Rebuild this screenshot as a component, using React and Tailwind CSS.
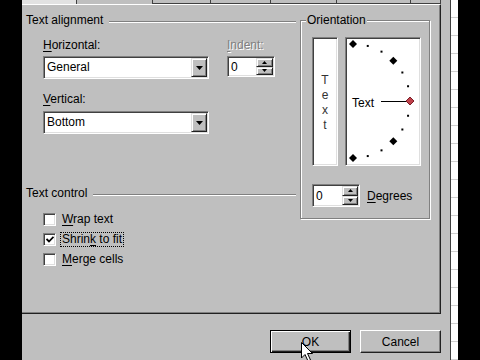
import React from "react";

// classic win9x bevels
const sunken =
  "border border-t-[#808080] border-l-[#808080] border-b-white border-r-white shadow-[inset_1px_1px_0_#404040,inset_-1px_-1px_0_#dfdfdf] p-[1px]";
const raised =
  "border border-t-[#dfdfdf] border-l-[#dfdfdf] border-b-[#202020] border-r-[#202020] shadow-[inset_1px_1px_0_#fff,inset_-1px_-1px_0_#808080]";
const etchedLine = "h-[2px] border-t border-t-[#808080] border-b border-b-white";

const Arrow = ({ up }) => (
  <svg width="7" height="4" viewBox="0 0 7 4">
    <polygon points={up ? "3.5,0 7,4 0,4" : "0,0 7,0 3.5,4"} fill="#000" />
  </svg>
);

const SmallArrow = ({ up }) => (
  <svg width="5" height="3" viewBox="0 0 5 3">
    <polygon points={up ? "2.5,0 5,3 0,3" : "0,0 5,0 2.5,3"} fill="#000" />
  </svg>
);

function Combo({ value }) {
  return (
    <div className={`w-[166px] h-[23px] bg-white flex ${sunken}`}>
      <span className="flex-1 pl-[2px] leading-[19px]">{value}</span>
      <div className={`w-[16px] bg-[#bfbfbf] flex items-center justify-center ${raised}`}>
        <Arrow />
      </div>
    </div>
  );
}

function Spinner({ className, btn }) {
  return (
    <div className={`${className} bg-white flex ${sunken}`}>
      <span className="flex-1 pl-[2px] self-center">0</span>
      <div className={`${btn} flex flex-col`}>
        <div className={`flex-1 bg-[#bfbfbf] flex items-center justify-center ${raised}`}>
          <SmallArrow up />
        </div>
        <div className={`flex-1 bg-[#bfbfbf] flex items-center justify-center ${raised}`}>
          <SmallArrow />
        </div>
      </div>
    </div>
  );
}

function Check({ checked, focused, children }) {
  return (
    <div className="h-[20px] flex items-center">
      <div className={`w-[13px] h-[13px] bg-white ${sunken} flex items-center justify-center`}>
        {checked && (
          <svg width="8" height="7" viewBox="0 0 8 7">
            <path d="M0.5 3 L3 5.5 L7.5 0.8" stroke="#000" strokeWidth="1.8" fill="none" />
          </svg>
        )}
      </div>
      <span
        className={`ml-[4px] px-[1px] leading-[13px] border ${
          focused ? "border-dotted border-black" : "border-transparent"
        }`}
      >
        {children}
      </span>
    </div>
  );
}

const U = ({ children }) => <span className="underline underline-offset-2">{children}</span>;

// orientation dial, coords relative to white inner box
const dots = [90, 75, 60, 45, 30, 15, 0, -15, -30, -45, -60, -75, -90].map((a) => {
  const r = (a * Math.PI) / 180;
  return { a, x: 6 + 57 * Math.cos(r), y: 62 - 57 * Math.sin(r) };
});

function Dial() {
  return (
    <svg width="72" height="125" viewBox="0 0 72 125">
      {dots.map((d) => {
        if (d.a === 0)
          return (
            <polygon
              key={d.a}
              points={`${d.x},${d.y - 4} ${d.x + 4},${d.y} ${d.x},${d.y + 4} ${d.x - 4},${d.y}`}
              fill="#c0404a"
              stroke="#7a1f28"
              strokeWidth="1"
            />
          );
        if (Math.abs(d.a) % 45 === 0)
          return (
            <polygon
              key={d.a}
              points={`${d.x},${d.y - 4} ${d.x + 4},${d.y} ${d.x},${d.y + 4} ${d.x - 4},${d.y}`}
              fill="#000"
            />
          );
        return <rect key={d.a} x={d.x - 1} y={d.y - 1} width="2" height="2" fill="#000" />;
      })}
      <line x1="34" y1="62.5" x2="59" y2="62.5" stroke="#000" strokeWidth="1" />
      <text x="5" y="68" fontSize="12" fill="#000" fontFamily="Liberation Sans, Arial, sans-serif">
        Text
      </text>
    </svg>
  );
}

export default function App() {
  return (
    <div className="w-[480px] h-[360px] flex bg-black overflow-hidden relative text-[12px] leading-[14px] text-black [font-family:'Liberation_Sans',Arial,sans-serif]">
      <div className="w-[22px] shrink-0" />

      {/* dialog body */}
      <div className="w-[429px] shrink-0 flex flex-col bg-[#bfbfbf] border-r border-r-[#404040]">
        {/* bottoms of the tabs */}
        <div className="h-[4px] flex">
          <div className="w-[55px] bg-[#e2e2e2] border-r border-r-[#404040]" />
          <div className="w-[75px]" />
          <div className="w-[58px] border-l border-b border-[#404040]" />
          <div className="w-[60px] border-l border-b border-[#404040]" />
          <div className="w-[66px] border-l border-b border-[#404040]" />
          <div className="w-[74px] border-l border-b border-[#404040]" />
          <div className="w-[31px] border-l border-b border-r border-[#404040]" />
        </div>

        {/* tab page */}
        <div className="w-[419px] h-[310px] flex pl-[4px] border-t border-t-white border-r border-r-[#202020] border-b border-b-[#202020] shadow-[inset_-1px_-1px_0_#808080]">
          {/* left column */}
          <div className="w-[270px] flex flex-col pt-[8px]">
            <div className="flex items-center h-[14px]">
              <span>Text alignment</span>
              <div className={`flex-1 ml-[6px] mt-[3px] ${etchedLine}`} />
            </div>

            <div className="ml-[17px] mt-[11px] flex">
              <div className="flex flex-col">
                <span>
                  <U>H</U>orizontal:
                </span>
                <div className="mt-[4px]">
                  <Combo value="General" />
                </div>
              </div>
              <div className="ml-[18px] flex flex-col">
                <span className="text-[#808080] [text-shadow:1px_1px_0_#fff]">
                  <U>I</U>ndent:
                </span>
                <Spinner className="mt-[4px] w-[48px] h-[21px]" btn="w-[17px]" />
              </div>
            </div>

            <div className="ml-[17px] mt-[13px] flex flex-col">
              <span>
                <U>V</U>ertical:
              </span>
              <div className="mt-[5px]">
                <Combo value="Bottom" />
              </div>
            </div>

            <div className="flex items-center h-[14px] mt-[52px]">
              <span>Text control</span>
              <div className={`flex-1 ml-[6px] mt-[3px] ${etchedLine}`} />
            </div>

            <div className="ml-[17px] mt-[9px] flex flex-col">
              <Check>
                <U>W</U>rap text
              </Check>
              <Check checked focused>
                Shrin<U>k</U> to fit
              </Check>
              <Check>
                <U>M</U>erge cells
              </Check>
            </div>
          </div>

          {/* orientation group */}
          <div className="ml-[4px] mt-[15px] w-[130px] h-[199px] relative border border-[#808080] shadow-[inset_1px_1px_0_#fff,1px_1px_0_#fff]">
            <span className="absolute -top-[8px] left-[5px] px-[1px] bg-[#bfbfbf]">Orientation</span>
            <div className="ml-[11px] mt-[16px] flex gap-[7px]">
              <div className={`w-[26px] h-[129px] bg-white ${sunken}`}>
                <div className="flex flex-col items-center pt-[34px] leading-[15px] text-[#333]">
                  <span>T</span>
                  <span>e</span>
                  <span>x</span>
                  <span>t</span>
                </div>
              </div>
              <div className={`w-[76px] h-[129px] bg-white ${sunken}`}>
                <Dial />
              </div>
            </div>
            <div className="ml-[11px] mt-[18px] flex items-center">
              <Spinner className="w-[48px] h-[23px]" btn="w-[16px]" />
              <span className="ml-[7px]">
                <U>D</U>egrees
              </span>
            </div>
          </div>
        </div>

        {/* buttons */}
        <div className="w-[419px] mt-[16px] flex justify-end gap-[9px]">
          <div className="w-[81px] h-[23px] flex items-center justify-center border border-black shadow-[inset_1px_1px_0_#fff,inset_-1px_-1px_0_#202020,inset_-2px_-2px_0_#808080]">
            OK
          </div>
          <div className="w-[81px] h-[23px] flex items-center justify-center border border-t-white border-l-white border-b-[#202020] border-r-[#202020] shadow-[inset_-1px_-1px_0_#808080]">
            Cancel
          </div>
        </div>
      </div>

      {/* worksheet peeking out behind */}
      <div className="w-[7px] shrink-0 bg-[repeating-linear-gradient(to_bottom,#fff_0px,#fff_17px,#cfcfcf_17px,#cfcfcf_18px)]" />
      <div className="flex-1" />

      {/* mouse pointer */}
      <svg className="absolute left-[301px] top-[342px]" width="13" height="20" viewBox="0 0 13 20">
        <path d="M0.5 0.5 L0.5 16 L4 12.5 L7 19 L9.5 18 L6.5 11.5 L11.5 11.5 Z" fill="#fff" stroke="#000" strokeWidth="1" />
      </svg>
    </div>
  );
}
